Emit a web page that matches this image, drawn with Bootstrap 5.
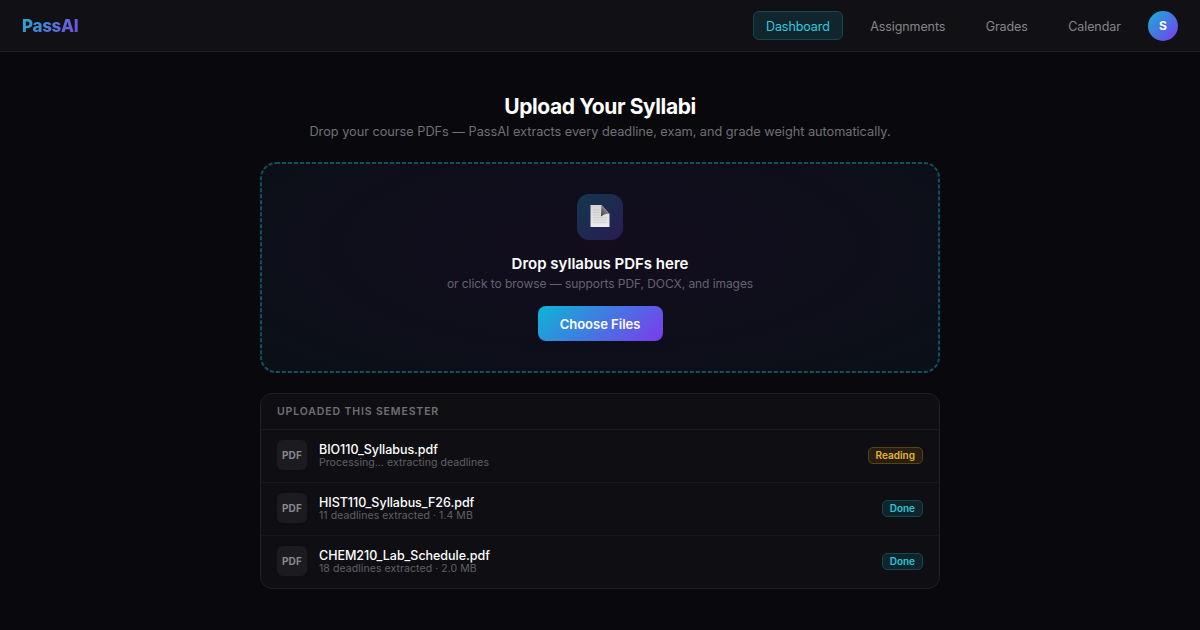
<!DOCTYPE html>
<html lang="en" data-bs-theme="dark">
<head>
<meta charset="utf-8">
<meta name="viewport" content="width=device-width, initial-scale=1">
<title>PassAI</title>
<link rel="stylesheet" href="https://cdn.jsdelivr.net/npm/bootstrap@5.3.0/dist/css/bootstrap.min.css">
<style>
body{background:#09090d;font-family:Inter,sans-serif;font-size:13px;line-height:16px;color:#fff;height:630px;overflow:hidden}
.topbar{height:52px;background:#111115;border-bottom:1px solid #242428;padding:0 22px}
.brand{font-size:17px;line-height:22px;font-weight:800;letter-spacing:-.3px;background:linear-gradient(135deg,#1fb0d0,#7c45e2);-webkit-background-clip:text;background-clip:text;color:transparent}
.topnav{gap:14px}
.topnav .nav-link{padding:7px 12.200px 4px;border:1px solid transparent;border-radius:6px;color:#85858a;font-size:12.500px;line-height:16px;font-weight:400;letter-spacing:-.08px}
.topnav .nav-link.active{color:#31cbe0;background:#10252d;border-color:#144850}
.avatar{width:30px;height:30px;background:linear-gradient(135deg,#14b2d6,#7c3aed);font-size:12px;font-weight:700}
.page{width:680px;padding-top:42px}
h1{font-size:21px;line-height:26px;font-weight:700;letter-spacing:-.4px}
.intro{color:#707075;line-height:16px;font-size:12.750px;letter-spacing:-.03px}
.drop{height:211px;border-radius:16px;margin-top:22px;padding-top:32px;background:radial-gradient(ellipse at 50% 40%,#130d1e 0%,#0e0e1a 55%,#0a1017 100%)}
.dash-frame{inset:0;pointer-events:none}
.file-tile{width:46px;height:46px;border-radius:12px;background:linear-gradient(135deg,#10384c,#2b1b55)}
.drop-title{font-size:15px;line-height:19px;font-weight:600;margin-top:14px}
.drop-note{font-size:12px;line-height:15px;color:#65636e;margin-top:3px;letter-spacing:-.07px}
.choose{width:125px;height:35px;margin-top:15px;padding:2px 0 0;border:0;border-radius:8px;background:linear-gradient(135deg,#0cb5d6,#7c3aed);font-size:13px;font-weight:600;color:#fff}
.files{margin-top:20px;border:1px solid #202024;border-radius:12px;background:#0f0f13;overflow:hidden}
.files-head{height:36px;padding:1px 16px 0;border-bottom:1px solid #1b1b1f;color:#707074;font-size:10.500px;font-weight:600;letter-spacing:.87px}
.file-row{height:53px;padding:0 16px 2px;gap:12px;border-bottom:1px solid #18181c}
.file-row:last-child{height:52px;border-bottom:0}
.kind{width:30px;height:30px;border-radius:6px;background:#1c1c20;color:#88888c;font-size:10px;font-weight:700;letter-spacing:.2px}
.fname{font-size:12.500px;line-height:14px;padding-top:1px;font-weight:500;letter-spacing:-.03px}
.fmeta{font-size:10.500px;line-height:12px;color:#606065;letter-spacing:.07px}
.state{font-size:10px;line-height:12px;font-weight:600;padding:1px 7px 2px;border:1px solid;border-radius:5px;height:17px}
.reading{color:#eab431;background:#272011;border-color:#574413}
.done{color:#2bc4da;background:#0e252c;border-color:#144650}
</style>
</head>
<body>
<nav class="topbar d-flex align-items-center justify-content-between">
  <a class="brand text-decoration-none" href="#">PassAI</a>
  <div class="nav topnav align-items-center">
    <a class="nav-link active" href="#">Dashboard</a>
    <a class="nav-link" href="#">Assignments</a>
    <a class="nav-link" href="#">Grades</a>
    <a class="nav-link" href="#">Calendar</a>
    <div class="avatar rounded-circle d-flex align-items-center justify-content-center">S</div>
  </div>
</nav>
<main class="page mx-auto">
  <h1 class="text-center mb-0">Upload Your Syllabi</h1>
  <p class="intro text-center mb-0 mt-1">Drop your course PDFs — PassAI extracts every deadline, exam, and grade weight automatically.</p>
  <section class="drop position-relative d-flex flex-column align-items-center">
    <svg class="dash-frame position-absolute" width="680" height="211"><rect x="1" y="1" width="678" height="209" rx="15" fill="none" stroke="#12505c" stroke-width="2" stroke-dasharray="4 2"/></svg>
    <div class="file-tile d-flex align-items-center justify-content-center">
      <svg width="20" height="24" viewBox="0 0 20 24">
        <defs>
          <linearGradient id="paper" x1="0" y1="0" x2="0" y2="1"><stop offset="0" stop-color="#d4d4d4"/><stop offset="1" stop-color="#ececec"/></linearGradient>
          <linearGradient id="fold" x1="0" y1="1" x2="1" y2="0"><stop offset="0" stop-color="#3c3c3c"/><stop offset=".6" stop-color="#858585"/><stop offset="1" stop-color="#d0d0d0"/></linearGradient>
        </defs>
        <path d="M.5 0H11.500L19.500 9V22H.5Z" fill="url(#paper)"/>
        <path d="M3 5H10M3 7.500H10M3 10H11M3 12.500H17M3 15H17M3 17.500H17" stroke="#c2c2c2" stroke-width=".6"/>
        <path d="M11.500 0Q11 6 11 11.500Q15 8 19.500 9Z" fill="url(#fold)"/>
      </svg>
    </div>
    <div class="drop-title">Drop syllabus PDFs here</div>
    <div class="drop-note">or click to browse — supports PDF, DOCX, and images</div>
    <button class="btn choose" type="button">Choose Files</button>
  </section>
  <section class="files">
    <div class="files-head d-flex align-items-center">UPLOADED THIS SEMESTER</div>
    <div class="file-row d-flex align-items-center">
      <div class="kind d-flex align-items-center justify-content-center">PDF</div>
      <div class="flex-grow-1"><div class="fname">BIO110_Syllabus.pdf</div><div class="fmeta">Processing… extracting deadlines</div></div>
      <span class="state reading">Reading</span>
    </div>
    <div class="file-row d-flex align-items-center">
      <div class="kind d-flex align-items-center justify-content-center">PDF</div>
      <div class="flex-grow-1"><div class="fname">HIST110_Syllabus_F26.pdf</div><div class="fmeta">11 deadlines extracted · 1.4 MB</div></div>
      <span class="state done">Done</span>
    </div>
    <div class="file-row d-flex align-items-center">
      <div class="kind d-flex align-items-center justify-content-center">PDF</div>
      <div class="flex-grow-1"><div class="fname">CHEM210_Lab_Schedule.pdf</div><div class="fmeta">18 deadlines extracted · 2.0 MB</div></div>
      <span class="state done">Done</span>
    </div>
  </section>
</main>
<script src="https://cdn.jsdelivr.net/npm/bootstrap@5.3.0/dist/js/bootstrap.bundle.min.js"></script>
</body>
</html>
